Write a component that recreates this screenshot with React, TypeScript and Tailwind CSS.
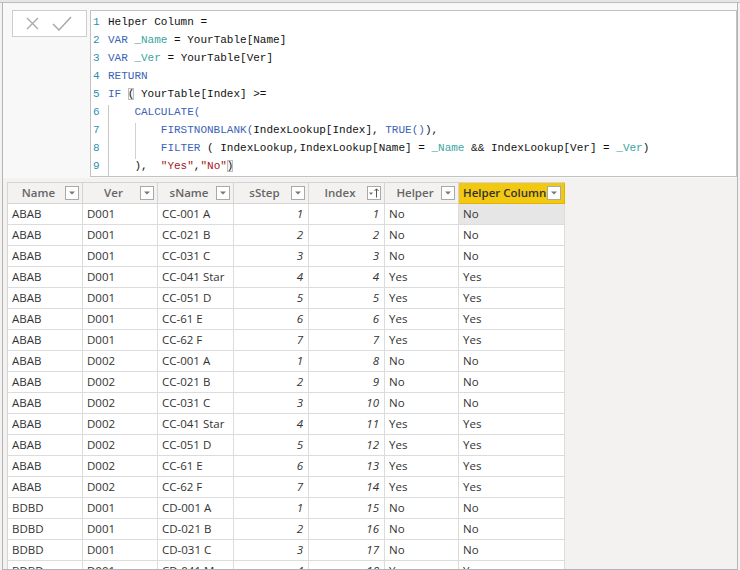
import React from 'react';

type Tok = { t: string; c?: 'k' | 'v' | 's' | 'b' };

const codeLines: Tok[][] = [
  [{ t: 'Helper Column =' }],
  [{ t: 'VAR', c: 'k' }, { t: ' ' }, { t: '_Name', c: 'v' }, { t: ' = YourTable[Name]' }],
  [{ t: 'VAR', c: 'k' }, { t: ' ' }, { t: '_Ver', c: 'v' }, { t: ' = YourTable[Ver]' }],
  [{ t: 'RETURN', c: 'k' }],
  [{ t: 'IF', c: 'k' }, { t: ' ' }, { t: '(', c: 'b' }, { t: ' YourTable[Index] >=' }],
  [{ t: '    ' }, { t: 'CALCULATE(', c: 'k' }],
  [{ t: '        ' }, { t: 'FIRSTNONBLANK(', c: 'k' }, { t: 'IndexLookup[Index], ' }, { t: 'TRUE()', c: 'k' }, { t: '),' }],
  [
    { t: '        ' },
    { t: 'FILTER', c: 'k' },
    { t: ' ( IndexLookup,IndexLookup[Name] = ' },
    { t: '_Name', c: 'v' },
    { t: ' && IndexLookup[Ver] = ' },
    { t: '_Ver', c: 'v' },
    { t: ')' },
  ],
  [{ t: '    ),  ' }, { t: '"Yes"', c: 's' }, { t: ',' }, { t: '"No"', c: 's' }, { t: ')', c: 'b' }],
];

const tokClass = (c?: Tok['c']) => {
  switch (c) {
    case 'k':
      return 'text-[#3b63b8]';
    case 'v':
      return 'text-[#3aa5a3]';
    case 's':
      return 'text-[#a31515]';
    case 'b':
      return 'outline outline-1 outline-[#bdbdbd] -outline-offset-1 bg-[#f4f4f4] text-[#111]';
    default:
      return 'text-[#111]';
  }
};

const rows: [string, string, string, number, number, string][] = [
  ['ABAB', 'D001', 'CC-001 A', 1, 1, 'No'],
  ['ABAB', 'D001', 'CC-021 B', 2, 2, 'No'],
  ['ABAB', 'D001', 'CC-031 C', 3, 3, 'No'],
  ['ABAB', 'D001', 'CC-041 Star', 4, 4, 'Yes'],
  ['ABAB', 'D001', 'CC-051 D', 5, 5, 'Yes'],
  ['ABAB', 'D001', 'CC-61 E', 6, 6, 'Yes'],
  ['ABAB', 'D001', 'CC-62 F', 7, 7, 'Yes'],
  ['ABAB', 'D002', 'CC-001 A', 1, 8, 'No'],
  ['ABAB', 'D002', 'CC-021 B', 2, 9, 'No'],
  ['ABAB', 'D002', 'CC-031 C', 3, 10, 'No'],
  ['ABAB', 'D002', 'CC-041 Star', 4, 11, 'Yes'],
  ['ABAB', 'D002', 'CC-051 D', 5, 12, 'Yes'],
  ['ABAB', 'D002', 'CC-61 E', 6, 13, 'Yes'],
  ['ABAB', 'D002', 'CC-62 F', 7, 14, 'Yes'],
  ['BDBD', 'D001', 'CD-001 A', 1, 15, 'No'],
  ['BDBD', 'D001', 'CD-021 B', 2, 16, 'No'],
  ['BDBD', 'D001', 'CD-031 C', 3, 17, 'No'],
  ['BDBD', 'D001', 'CD-041 M', 4, 18, 'Yes'],
];

const cols = [
  { name: 'Name', w: 'w-[75px]' },
  { name: 'Ver', w: 'w-[75px]' },
  { name: 'sName', w: 'w-[76px]' },
  { name: 'sStep', w: 'w-[75px]' },
  { name: 'Index', w: 'w-[76px]', sort: true },
  { name: 'Helper', w: 'w-[74px]' },
  { name: 'Helper Column', w: 'w-[106px]', active: true },
];

function DropBtn({ sort }: { sort?: boolean }) {
  return (
    <span className="w-[14px] h-[14px] shrink-0 bg-white border border-[#a9a9a9] flex items-center justify-center">
      {sort ? (
        <svg width="12" height="12" viewBox="0 0 12 12">
          <path d="M1 5.5 L5 5.5 L3 8 Z" fill="#777" />
          <path d="M8.5 10.5 V2 M6.5 4 L8.5 1.8 L10.5 4" stroke="#555" strokeWidth="1" fill="none" />
        </svg>
      ) : (
        <svg width="8" height="6" viewBox="0 0 8 6">
          <path d="M1 1.5 L7 1.5 L4 4.5 Z" fill="#777" />
        </svg>
      )}
    </span>
  );
}

export default function App() {
  return (
    <div className="w-[740px] h-[570px] overflow-hidden bg-[#f3f2f1] flex flex-col font-['Open_Sans','Noto_Sans',sans-serif]">
      {/* top cut-off strip */}
      <div className="h-[3px] bg-[#e6e6e6] border-b border-[#bdbdbd] shrink-0" />

      <div className="flex-1 flex flex-col ml-[2px] mr-[2px] border-l border-r border-b border-[#b4b4b4] min-h-0">
        {/* formula bar */}
        <div className="flex h-[175px] shrink-0 bg-[#f8f8f8] pt-[7px] pb-[1px]">
          <div className="w-[87px] shrink-0 pl-[9px]">
            <div className="w-[75px] h-[27px] bg-white border border-[#cdcdcd] flex items-center gap-[13px] pl-[13px]">
              <svg width="13" height="13" viewBox="0 0 13 13">
                <path d="M1 1 L12 12 M12 1 L1 12" stroke="#a9a9a9" strokeWidth="1.3" />
              </svg>
              <svg width="20" height="15" viewBox="0 0 20 15">
                <path d="M1 8 L7 14 L19 1" stroke="#a9a9a9" strokeWidth="1.5" fill="none" />
              </svg>
            </div>
          </div>
          <div className="flex-1 bg-white border border-[#c2c2c2] relative pt-[2px] font-['Liberation_Mono',monospace] text-[11px] leading-[18px] whitespace-pre">
            <span className="absolute left-[17px] top-[94px] h-[72px] w-px bg-[#c8c8c8]" />
            <span className="absolute left-[44px] top-[112px] h-[36px] w-px bg-[#d0d0d0]" />
            {codeLines.map((line, i) => (
              <div key={i} className="flex">
                <span className="w-[17px] pl-[2px] text-[#2b91af]">{i + 1}</span>
                <span>
                  {line.map((tk, j) => (
                    <span key={j} className={tokClass(tk.c)}>
                      {tk.t}
                    </span>
                  ))}
                </span>
              </div>
            ))}
          </div>
        </div>

        {/* table */}
        <div className="flex-1 pl-[4px] pt-[4px] min-h-0 overflow-hidden">
          <div className="w-[558px] text-[11.5px] text-[#333]">
            <div className="flex h-[22px] border-t border-l border-[#d4d4d4]">
              {cols.map((c) => (
                <div
                  key={c.name}
                  className={`${c.w} shrink-0 flex items-center pl-[4px] pr-[3px] border-r border-b ${
                    c.active ? 'bg-[#f2c811] border-[#e0b400] text-[#333]' : 'bg-[#f3f2f1] border-[#d4d4d4] text-[#666]'
                  }`}
                >
                  <span className={`flex-1 font-semibold ${c.active ? 'text-left' : 'text-center'}`}>{c.name}</span>
                  <DropBtn sort={c.sort} />
                </div>
              ))}
            </div>
            {rows.map((r, i) => (
              <div key={i} className="flex h-[21px] border-l border-[#d4d4d4]">
                <div className="w-[75px] shrink-0 bg-white border-r border-b border-[#dcdcdc] pl-[4px] leading-[20px]">{r[0]}</div>
                <div className="w-[75px] shrink-0 bg-white border-r border-b border-[#dcdcdc] pl-[4px] leading-[20px]">{r[1]}</div>
                <div className="w-[76px] shrink-0 bg-white border-r border-b border-[#dcdcdc] pl-[4px] leading-[20px]">{r[2]}</div>
                <div className="w-[75px] shrink-0 bg-white border-r border-b border-[#dcdcdc] pr-[5px] text-right italic leading-[20px]">{r[3]}</div>
                <div className="w-[76px] shrink-0 bg-white border-r border-b border-[#dcdcdc] pr-[5px] text-right italic leading-[20px]">{r[4]}</div>
                <div className="w-[74px] shrink-0 bg-white border-r border-b border-[#dcdcdc] pl-[4px] leading-[20px]">{r[5]}</div>
                <div
                  className={`w-[106px] shrink-0 border-r border-b border-[#dcdcdc] pl-[4px] leading-[20px] ${
                    i === 0 ? 'bg-[#e6e6e6]' : 'bg-white'
                  }`}
                >
                  {r[5]}
                </div>
              </div>
            ))}
          </div>
        </div>
      </div>
    </div>
  );
}
